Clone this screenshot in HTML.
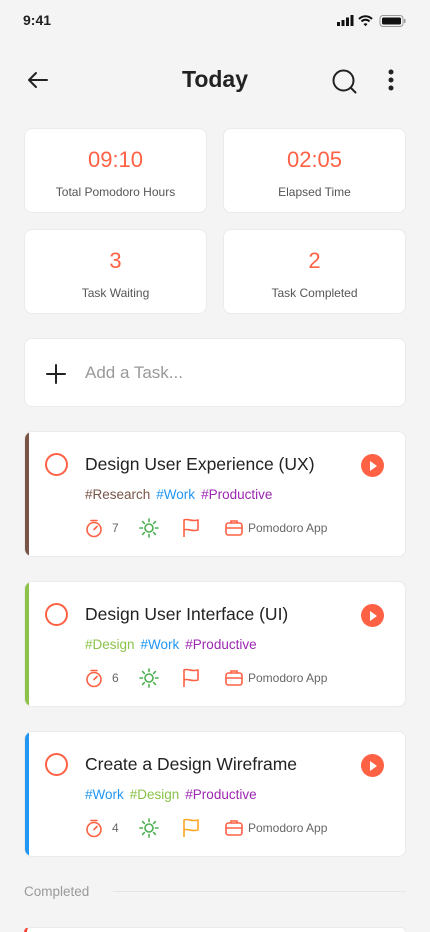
<!DOCTYPE html>
<html style="overflow:hidden;width:430px;height:932px"><head><meta charset="utf-8"><style>
*{box-sizing:border-box;margin:0;padding:0}
body{width:430px;height:932px;overflow:hidden;background:#f4f4f4;font-family:"Liberation Sans",sans-serif;color:#222;position:relative}
.abs{position:absolute}
.card{position:absolute;background:#fff;border:1px solid #ebebeb;border-radius:8px}
.stat{text-align:center}
.stat .n{position:absolute;left:0;right:0;top:18px;font-size:22px;color:#ff6145}
.stat .l{position:absolute;left:0;right:0;top:56px;font-size:12px;color:#555}
.task{left:24px;width:382px;height:126px;overflow:hidden}
.bar{position:absolute;left:0;top:0;bottom:0;width:4px}
.circ{position:absolute;left:20px;top:21px;width:23px;height:23px;border:2.5px solid #ff6145;border-radius:50%}
.title{position:absolute;left:60px;top:22px;font-size:17.5px;color:#222}
.tags{position:absolute;left:60px;top:55px;font-size:13.5px}
.tags span{margin-right:6px}
.play{position:absolute;left:336px;top:22px;width:23px;height:23px;border-radius:50%;background:#ff6145}
.play:after{content:"";position:absolute;left:9px;top:6.5px;border-left:7px solid #fff;border-top:5px solid transparent;border-bottom:5px solid transparent}
.meta{position:absolute;top:86px;left:60px;height:20px;width:300px;font-size:12px;color:#666}
.meta svg{position:absolute;top:0}
.meta span{position:absolute;top:3px}
</style></head><body>
<div class="abs" style="left:23px;top:12px;font-size:14px;font-weight:bold">9:41</div>
<svg class="abs" style="left:336px;top:14px" width="70" height="14" viewBox="0 0 70 14">
<rect x="1" y="8" width="3" height="4" fill="#111"/><rect x="5.5" y="6" width="3" height="6" fill="#111"/><rect x="10" y="3.5" width="3" height="8.5" fill="#111"/><rect x="14.5" y="1" width="3" height="11" fill="#111"/>
<path d="M23 5a9 9 0 0 1 13 0M25.5 7.5a5.5 5.5 0 0 1 8 0" stroke="#111" stroke-width="2" fill="none"/><path d="M27.5 10l2 2.2 2-2.2a3 3 0 0 0-4 0z" fill="#111"/>
<rect x="44" y="1.5" width="23" height="11" rx="3" stroke="#999" fill="none"/><rect x="46" y="3.5" width="19" height="7" rx="1.5" fill="#111"/><rect x="68" y="5" width="1.5" height="4" fill="#999"/>
</svg>
<svg class="abs" style="left:26px;top:70px" width="24" height="20" viewBox="0 0 24 20"><path d="M21 10H3M10 3L3 10l7 7" stroke="#222" stroke-width="2" fill="none" stroke-linecap="round" stroke-linejoin="round"/></svg>
<div class="abs" style="left:0;right:0;top:66px;text-align:center;font-size:23px;font-weight:bold;color:#222">Today</div>
<svg class="abs" style="left:331px;top:68px" width="28" height="28" viewBox="0 0 28 28"><circle cx="12.5" cy="12.5" r="10" stroke="#222" stroke-width="2" fill="none"/><path d="M20 20l4.5 4.5" stroke="#222" stroke-width="2" stroke-linecap="round"/></svg>
<svg class="abs" style="left:386px;top:68px" width="10" height="26"><circle cx="5" cy="4" r="2.5" fill="#222"/><circle cx="5" cy="12" r="2.5" fill="#222"/><circle cx="5" cy="20" r="2.5" fill="#222"/></svg>

<div class="card stat" style="left:24px;top:128px;width:183px;height:85px"><div class="n">09:10</div><div class="l">Total Pomodoro Hours</div></div>
<div class="card stat" style="left:223px;top:128px;width:183px;height:85px"><div class="n">02:05</div><div class="l">Elapsed Time</div></div>
<div class="card stat" style="left:24px;top:229px;width:183px;height:85px"><div class="n">3</div><div class="l">Task Waiting</div></div>
<div class="card stat" style="left:223px;top:229px;width:183px;height:85px"><div class="n">2</div><div class="l">Task Completed</div></div>

<div class="card" style="left:24px;top:338px;width:382px;height:69px">
<svg class="abs" style="left:20px;top:24px" width="22" height="22"><path d="M11 2v18M2 11h18" stroke="#222" stroke-width="2" stroke-linecap="round"/></svg>
<div class="abs" style="left:60px;top:24px;font-size:17px;color:#999">Add a Task...</div></div>

<div class="card task" style="top:431px"><div class="bar" style="background:#795548"></div><div class="circ"></div><div class="title">Design User Experience (UX)</div><div class="play"></div>
<div class="tags"><span style="color:#795548">#Research</span><span style="color:#2196f3">#Work</span><span style="color:#9c27b0">#Productive</span></div>
<div class="meta">
<svg style="left:0" width="18" height="20" viewBox="0 0 18 20"><circle cx="9" cy="11.5" r="7" stroke="#ff6145" stroke-width="1.6" fill="none"/><path d="M6 2.5h6M9 11.5l3-3" stroke="#ff6145" stroke-width="1.6" stroke-linecap="round"/></svg><span style="left:27px">7</span>
<svg style="left:54px" width="20" height="20" viewBox="0 0 20 20"><circle cx="10" cy="10" r="4" stroke="#4caf50" stroke-width="1.6" fill="none"/><path d="M10 1v2.5M10 16.5V19M1 10h2.5M16.5 10H19M3.6 3.6l1.8 1.8M14.6 14.6l1.8 1.8M3.6 16.4l1.8-1.8M14.6 5.4l1.8-1.8" stroke="#4caf50" stroke-width="1.6" stroke-linecap="round"/></svg>
<svg style="left:96px" width="20" height="20" viewBox="0 0 20 20"><path d="M3 19V2c4-2 7 2 14 0v10c-7 2-10-2-14 0" stroke="#ff6145" stroke-width="1.6" fill="none" stroke-linejoin="round"/></svg>
<svg style="left:139px" width="20" height="20" viewBox="0 0 20 20"><rect x="2" y="5" width="16" height="12" rx="2.5" stroke="#ff6145" stroke-width="1.6" fill="none"/><path d="M7 5V3h6v2M2 10h16" stroke="#ff6145" stroke-width="1.6" fill="none"/></svg><span style="left:163px">Pomodoro App</span></div></div>

<div class="card task" style="top:581px"><div class="bar" style="background:#8bc34a"></div><div class="circ"></div><div class="title">Design User Interface (UI)</div><div class="play"></div>
<div class="tags"><span style="color:#8bc34a">#Design</span><span style="color:#2196f3">#Work</span><span style="color:#9c27b0">#Productive</span></div>
<div class="meta">
<svg style="left:0" width="18" height="20" viewBox="0 0 18 20"><circle cx="9" cy="11.5" r="7" stroke="#ff6145" stroke-width="1.6" fill="none"/><path d="M6 2.5h6M9 11.5l3-3" stroke="#ff6145" stroke-width="1.6" stroke-linecap="round"/></svg><span style="left:27px">6</span>
<svg style="left:54px" width="20" height="20" viewBox="0 0 20 20"><circle cx="10" cy="10" r="4" stroke="#4caf50" stroke-width="1.6" fill="none"/><path d="M10 1v2.5M10 16.5V19M1 10h2.5M16.5 10H19M3.6 3.6l1.8 1.8M14.6 14.6l1.8 1.8M3.6 16.4l1.8-1.8M14.6 5.4l1.8-1.8" stroke="#4caf50" stroke-width="1.6" stroke-linecap="round"/></svg>
<svg style="left:96px" width="20" height="20" viewBox="0 0 20 20"><path d="M3 19V2c4-2 7 2 14 0v10c-7 2-10-2-14 0" stroke="#ff6145" stroke-width="1.6" fill="none" stroke-linejoin="round"/></svg>
<svg style="left:139px" width="20" height="20" viewBox="0 0 20 20"><rect x="2" y="5" width="16" height="12" rx="2.5" stroke="#ff6145" stroke-width="1.6" fill="none"/><path d="M7 5V3h6v2M2 10h16" stroke="#ff6145" stroke-width="1.6" fill="none"/></svg><span style="left:163px">Pomodoro App</span></div></div>

<div class="card task" style="top:731px"><div class="bar" style="background:#2196f3"></div><div class="circ"></div><div class="title">Create a Design Wireframe</div><div class="play"></div>
<div class="tags"><span style="color:#2196f3">#Work</span><span style="color:#8bc34a">#Design</span><span style="color:#9c27b0">#Productive</span></div>
<div class="meta">
<svg style="left:0" width="18" height="20" viewBox="0 0 18 20"><circle cx="9" cy="11.5" r="7" stroke="#ff6145" stroke-width="1.6" fill="none"/><path d="M6 2.5h6M9 11.5l3-3" stroke="#ff6145" stroke-width="1.6" stroke-linecap="round"/></svg><span style="left:27px">4</span>
<svg style="left:54px" width="20" height="20" viewBox="0 0 20 20"><circle cx="10" cy="10" r="4" stroke="#4caf50" stroke-width="1.6" fill="none"/><path d="M10 1v2.5M10 16.5V19M1 10h2.5M16.5 10H19M3.6 3.6l1.8 1.8M14.6 14.6l1.8 1.8M3.6 16.4l1.8-1.8M14.6 5.4l1.8-1.8" stroke="#4caf50" stroke-width="1.6" stroke-linecap="round"/></svg>
<svg style="left:96px" width="20" height="20" viewBox="0 0 20 20"><path d="M3 19V2c4-2 7 2 14 0v10c-7 2-10-2-14 0" stroke="#ffa726" stroke-width="1.6" fill="none" stroke-linejoin="round"/></svg>
<svg style="left:139px" width="20" height="20" viewBox="0 0 20 20"><rect x="2" y="5" width="16" height="12" rx="2.5" stroke="#ff6145" stroke-width="1.6" fill="none"/><path d="M7 5V3h6v2M2 10h16" stroke="#ff6145" stroke-width="1.6" fill="none"/></svg><span style="left:163px">Pomodoro App</span></div></div>

<div class="abs" style="left:24px;top:884px;font-size:13.5px;color:#999">Completed</div>
<div class="abs" style="left:113px;top:891px;width:293px;height:1px;background:#e6e6e6"></div>
<div class="card" style="left:24px;top:927px;width:382px;height:5px;border-left:3px solid #f44336;border-bottom:none;border-radius:8px 8px 0 0"></div>
</body></html>
